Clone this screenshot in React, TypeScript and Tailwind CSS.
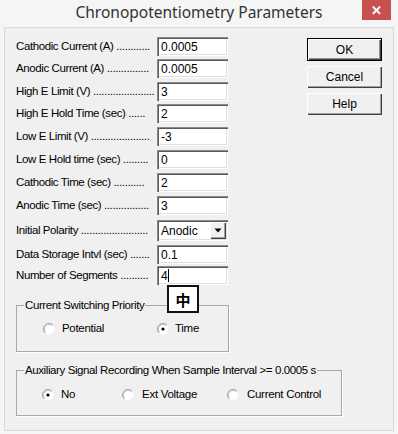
import React from "react";

const rows = [
  { label: "Cathodic Current (A) ............", value: "0.0005", mt: "mt-0" },
  { label: "Anodic Current (A) ...............", value: "0.0005", mt: "mt-[3px]" },
  { label: "High E Limit (V) ......................", value: "3", mt: "mt-[4px]" },
  { label: "High E Hold Time (sec) ......", value: "2", mt: "mt-[3px]" },
  { label: "Low E Limit (V) .....................", value: "-3", mt: "mt-[4px]" },
  { label: "Low E Hold time (sec) .........", value: "0", mt: "mt-[4px]" },
  { label: "Cathodic Time (sec) ...........", value: "2", mt: "mt-[4px]" },
  { label: "Anodic Time (sec) ................", value: "3", mt: "mt-[4px]" },
];

const sunken =
  "bg-white shadow-[inset_1px_1px_0_#8a8a8a,inset_2px_2px_0_#5a5a5a,inset_-1px_-1px_0_#ffffff,inset_-2px_-2px_0_#e0e0e0]";

const Radio = ({ checked }: { checked?: boolean }) => (
  <svg width="12" height="12" viewBox="0 0 12 12" className="shrink-0">
    <circle cx="6" cy="6" r="5.5" fill="#fff" />
    <path d="M2.11 9.89 A5.5 5.5 0 0 1 9.89 2.11" fill="none" stroke="#9a9a9a" strokeWidth="1" />
    <path d="M2.82 9.18 A4.5 4.5 0 0 1 9.18 2.82" fill="none" stroke="#c8c8c8" strokeWidth="1" />
    {checked && <circle cx="6" cy="6" r="1.6" fill="#000" />}
  </svg>
);

const Field = ({ children }: { children: React.ReactNode }) => (
  <div className={`w-[71px] h-[19px] flex items-center pl-[4px] text-[12px] text-black ${sunken}`}>
    {children}
  </div>
);

const Row = ({ label, mt, children }: { label: string; mt: string; children: React.ReactNode }) => (
  <div className={`flex items-center ${mt}`}>
    <div className="w-[141px] whitespace-nowrap overflow-hidden text-[11.5px] tracking-[-0.4px] text-black">
      {label}
    </div>
    {children}
  </div>
);

const Btn = ({ label, primary }: { label: string; primary?: boolean }) => (
  <div
    className={`w-[75px] flex items-center justify-center text-[12px] text-black bg-[#f0f0f0] ${
      primary
        ? "h-[23px] border border-black shadow-[inset_1px_1px_0_#fff,inset_-1px_-1px_0_#404040,inset_-2px_-2px_0_#909090]"
        : "h-[22px] shadow-[inset_1px_1px_0_#fff,inset_-1px_-1px_0_#404040,inset_-2px_-2px_0_#a0a0a0]"
    }`}
  >
    {label}
  </div>
);

const Option = ({ label, checked, ml, gap }: { label: string; checked?: boolean; ml: string; gap: string }) => (
  <div className={`flex items-center whitespace-nowrap ${ml} ${gap}`}>
    <Radio checked={checked} />
    <span>{label}</span>
  </div>
);

export default function App() {
  return (
    <div className="w-[398px] h-[434px] bg-[#f5f5f5] overflow-hidden font-['Liberation_Sans',Arial,sans-serif]">
      {/* title bar */}
      <div className="relative h-[27px] flex items-center justify-center">
        <span className="font-['Noto_Sans',sans-serif] text-[15.5px] text-[#333] leading-none -mt-[2px]">
          Chronopotentiometry Parameters
        </span>
        <div className="absolute right-[7px] top-0 w-[29px] h-[20px] bg-[#c75050] flex items-center justify-center text-white text-[13px] font-bold leading-none">
          ✕
        </div>
      </div>

      {/* dialog body */}
      <div className="relative ml-[4px] w-[390px] h-[404px] border border-[#d9d9d9] bg-[#f0f0f0] pt-[9px]">
        <div className="flex">
          <div className="pl-[11px] w-[223px]">
            {rows.map((r) => (
              <Row key={r.label} label={r.label} mt={r.mt}>
                <Field>{r.value}</Field>
              </Row>
            ))}
            <Row label="Initial Polarity ........................" mt="mt-[5px]">
              <div className={`w-[71px] h-[21px] flex items-center justify-between pl-[4px] pr-[2px] text-[12px] ${sunken}`}>
                <span>Anodic</span>
                <div className="w-[16px] h-[17px] bg-[#f0f0f0] flex items-center justify-center shadow-[inset_1px_1px_0_#fff,inset_-1px_-1px_0_#404040,inset_-2px_-2px_0_#a0a0a0]">
                  <svg width="8" height="5" viewBox="0 0 8 5">
                    <path d="M0.5 0.5 H7.5 L4 4.5 Z" fill="#000" />
                  </svg>
                </div>
              </div>
            </Row>
            <Row label="Data Storage Intvl (sec) ......." mt="mt-[4px]">
              <Field>0.1</Field>
            </Row>
            <Row label="Number of Segments .........." mt="mt-[2px]">
              <Field>
                <span>4</span>
                <span className="w-[1px] h-[13px] bg-black" />
              </Field>
            </Row>
          </div>

          <div className="ml-[79px] flex flex-col gap-[5px] pt-[1px]">
            <Btn label="OK" primary />
            <Btn label="Cancel" />
            <Btn label="Help" />
          </div>
        </div>

        <fieldset className="ml-[11px] mt-[13px] w-[213px] h-[54px] border border-[#a8a8a8] shadow-[1px_1px_0_#fff]">
          <legend className="ml-[7px] px-[1px] text-[11.5px] tracking-[-0.4px] text-black leading-[14px]">
            Current Switching Priority
          </legend>
          <div className="flex items-center mt-[8px] text-[11.5px] tracking-[-0.3px] text-black">
            <Option label="Potential" ml="ml-[26px]" gap="gap-[7px]" />
            <Option label="Time" checked ml="ml-[53px]" gap="gap-[6px]" />
          </div>
        </fieldset>

        <fieldset className="ml-[11px] mt-[11px] w-[326px] h-[53px] border border-[#a8a8a8] shadow-[1px_1px_0_#fff]">
          <legend className="ml-[7px] px-[1px] text-[11.5px] tracking-[-0.4px] text-black leading-[14px]">
            Auxiliary Signal Recording When Sample Interval &gt;= 0.0005 s
          </legend>
          <div className="flex items-center mt-[9px] text-[11.5px] tracking-[-0.3px] text-black">
            <Option label="No" checked ml="ml-[25px]" gap="gap-[7px]" />
            <Option label="Ext Voltage" ml="ml-[47px]" gap="gap-[8px]" />
            <Option label="Current Control" ml="ml-[30px]" gap="gap-[8px]" />
          </div>
        </fieldset>

        {/* IME indicator floating over the dialog */}
        <div className="absolute left-[162px] top-[257px] w-[32px] h-[28px] border-2 border-[#111] bg-white flex items-center justify-center font-['Noto_Sans_CJK_SC',sans-serif] font-bold text-[15px] leading-none text-black">
          中
        </div>
      </div>
    </div>
  );
}
